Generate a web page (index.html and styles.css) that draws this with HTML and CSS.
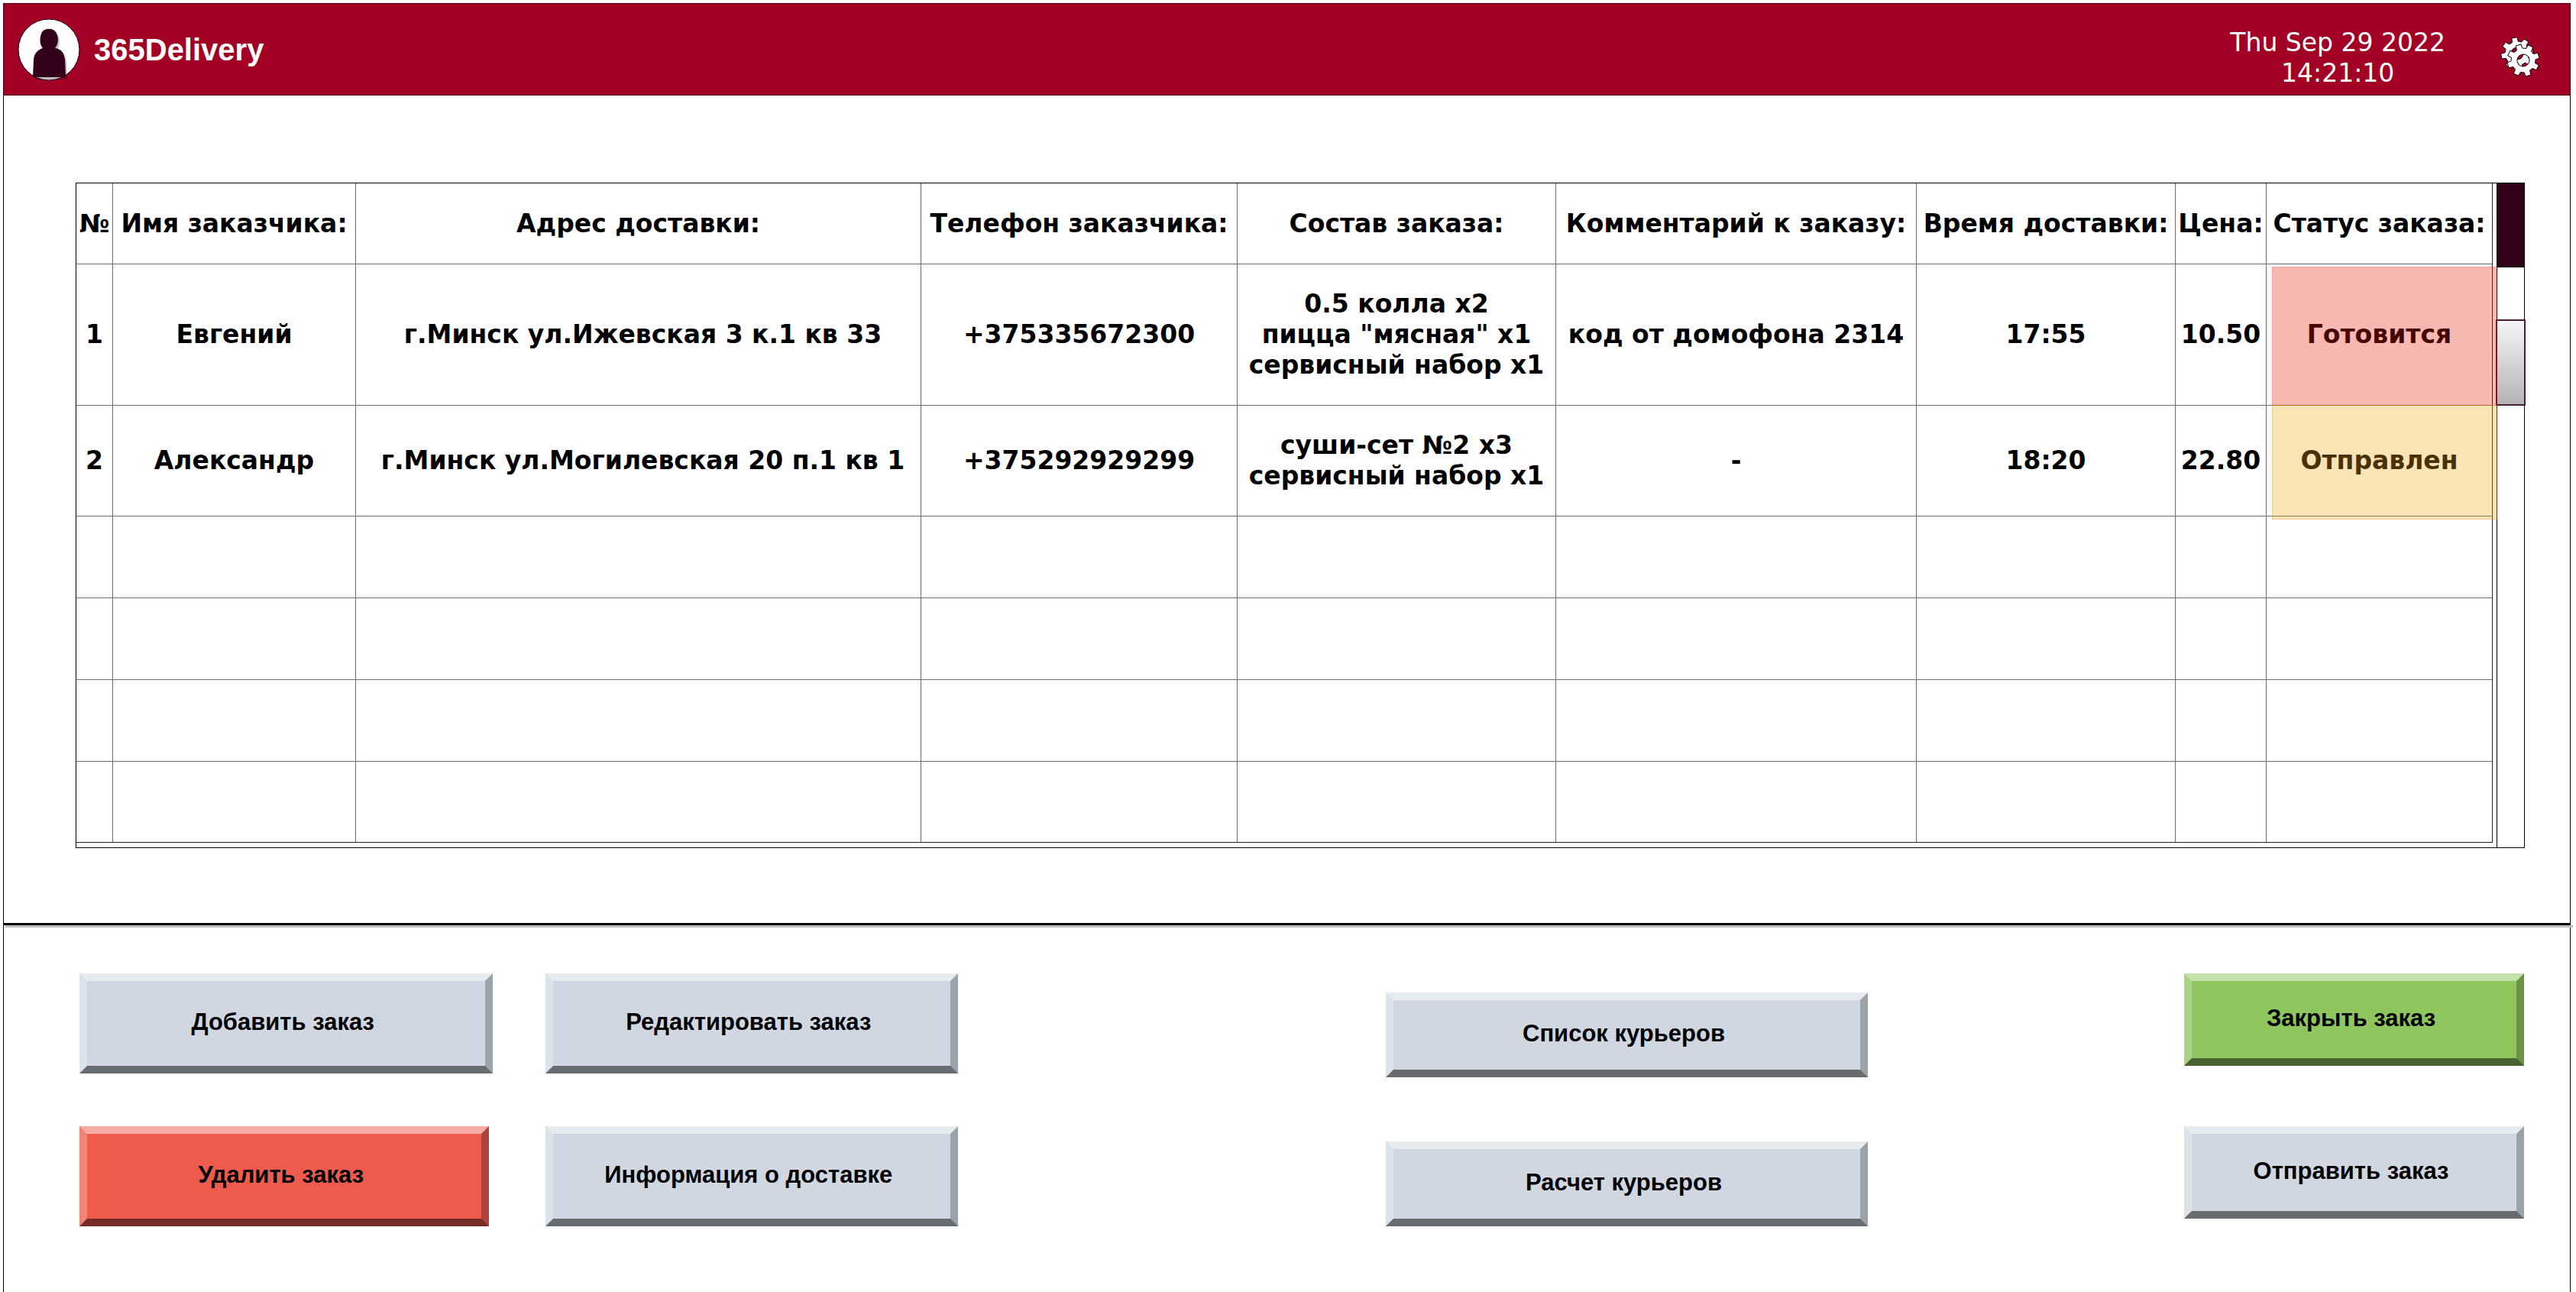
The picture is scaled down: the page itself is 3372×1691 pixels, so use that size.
FILE: index.html
```html
<!DOCTYPE html>
<html lang="ru">
<head>
<meta charset="utf-8">
<meta name="viewport" content="width=device-width, initial-scale=1">
<title>365Delivery</title>
<link rel="stylesheet" href="styles.css">
</head>
<body>
<div class="app">
  <header class="topbar">
    <svg class="avatar" viewBox="0 0 82 82" aria-hidden="true">
      <circle cx="41" cy="41" r="40" fill="#fff" stroke="#1a000d"/>
      <g fill="#000" fill-opacity=".25" transform="translate(2 3)">
        <path d="M33 39C28 34 29 23 32 18C35 13 46 12 50 18C54 23 54 34 49 39C57 40 61 45 62 54L63 77H20L21 54C22 45 27 41 33 39Z"/>
      </g>
      <path fill="#33001a" d="M33 39C28 34 29 23 32 18C35 13 46 12 50 18C54 23 54 34 49 39C57 40 61 45 62 54L63 77H20L21 54C22 45 27 41 33 39Z"/>
    </svg>
    <h1 class="brand">365Delivery</h1>
    <time class="clock" datetime="2022-09-29T14:21:10">Thu Sep 29 2022<br>14:21:10</time>
    <button class="settings" type="button" aria-label="Настройки">
      <svg viewBox="0 0 52 52" fill="#fff" fill-rule="evenodd" stroke="#1a000d">
        <defs>
          <path id="gear" d="M15.500-4L21-3.500L21 3.500L15.500 4L13.800 8.100L17.300 12.400L12.400 17.300L8.100 13.800L4 15.500L3.500 21L-3.500 21L-4 15.500L-8.100 13.800L-12.400 17.300L-17.300 12.400L-13.800 8.100L-15.500 4L-21 3.500L-21-3.500L-15.500-4L-13.800-8.100L-17.300-12.400L-12.400-17.300L-8.100-13.800L-4-15.500L-3.500-21L3.500-21L4-15.500L8.100-13.800L12.400-17.300L17.300-12.400L13.800-8.100ZM8 0A8 8 0 1 0-8 0A8 8 0 1 0 8 0Z"/>
        </defs>
        <use href="#gear" transform="translate(21 21) rotate(-10)"/>
        <use href="#gear" transform="translate(29 30) rotate(-18)"/>
      </svg>
    </button>
  </header>

  <main>
    <section class="orders">
      <div class="frame">
        <div class="table-area">
          <table class="order-table">
            <colgroup>
              <col class="c-num"><col class="c-name"><col class="c-address"><col class="c-phone"><col class="c-items"><col class="c-comment"><col class="c-time"><col class="c-price"><col class="c-status">
            </colgroup>
            <thead>
              <tr>
                <th scope="col">№</th><th scope="col">Имя заказчика:</th><th scope="col">Адрес доставки:</th><th scope="col">Телефон заказчика:</th><th scope="col">Состав заказа:</th><th scope="col">Комментарий к заказу:</th><th scope="col">Время доставки:</th><th scope="col">Цена:</th><th scope="col">Статус заказа:</th>
              </tr>
            </thead>
            <tbody>
              <tr class="row-3">
                <td>1</td><td>Евгений</td><td class="address">г.Минск ул.Ижевская 3 к.1 кв 33</td><td>+375335672300</td><td>0.5 колла x2<br>пицца "мясная" x1<br>сервисный набор x1</td><td>код от домофона 2314</td><td>17:55</td><td>10.50</td><td class="status cooking">Готовится</td>
              </tr>
              <tr class="row-2">
                <td>2</td><td>Александр</td><td class="address">г.Минск ул.Могилевская 20 п.1 кв 1</td><td>+375292929299</td><td>суши-сет №2 x3<br>сервисный набор x1</td><td>-</td><td>18:20</td><td>22.80</td><td class="status sent">Отправлен</td>
              </tr>
              <tr><td></td><td></td><td></td><td></td><td></td><td></td><td></td><td></td><td></td></tr>
              <tr><td></td><td></td><td></td><td></td><td></td><td></td><td></td><td></td><td></td></tr>
              <tr><td></td><td></td><td></td><td></td><td></td><td></td><td></td><td></td><td></td></tr>
              <tr><td></td><td></td><td></td><td></td><td></td><td></td><td></td><td></td><td></td></tr>
            </tbody>
          </table>
        </div>
        <div class="scroll">
          <div class="scroll-cap"></div>
          <div class="scroll-thumb"></div>
        </div>
      </div>
    </section>

    <hr class="divider">

    <section class="actions">
      <div class="group orders-group">
        <button class="btn" type="button">Добавить заказ</button>
        <button class="btn" type="button">Редактировать заказ</button>
        <button class="btn danger" type="button">Удалить заказ</button>
        <button class="btn" type="button">Информация о доставке</button>
      </div>
      <div class="group couriers-group">
        <button class="btn" type="button">Список курьеров</button>
        <button class="btn" type="button">Расчет курьеров</button>
      </div>
      <div class="group finish-group">
        <button class="btn success" type="button">Закрыть заказ</button>
        <button class="btn" type="button">Отправить заказ</button>
      </div>
    </section>
  </main>
</div>
</body>
</html>
```
FILE: styles.css
```css
* {
  box-sizing: border-box;
}

body {
  margin: 0;
  background: #fff;
  color: #000;
  font-family: "DejaVu Sans", Verdana, sans-serif;
  font-size: 33px;
  line-height: 40px;
}

.app {
  margin: 4px 7px 0 4px;
  min-height: calc(100vh - 4px);
  border: solid #000;
  border-width: 0 1px;
}

/* top bar */
.topbar {
  display: flex;
  align-items: center;
  height: 121px;
  margin: 0 -1px;
  padding: 0 38px 0 18px;
  background: #a20025;
  border: 1px solid #4d0012;
  color: #fff;
}

.avatar {
  width: 82px;
  height: 82px;
}

.brand {
  margin: 0 auto 0 18px;
  font: bold 40px/48px "Liberation Sans", Arial, sans-serif;
}

.clock {
  padding-top: 22px;
  text-align: center;
}

.settings {
  width: 52px;
  height: 52px;
  margin: 20px 0 0 73px;
  padding: 0;
  border: 0;
  background: none;
}

.settings svg {
  display: block;
}

/* orders table */
.orders {
  padding: 114px 59px 98px 94px;
}

.frame {
  display: flex;
  border: 1px solid #000;
}

.table-area {
  flex: 1;
  min-width: 0;
  padding: 0 6px 6px 0;
}

.order-table {
  width: 100%;
  table-layout: fixed;
  border-collapse: separate;
  border-spacing: 0;
  border: solid #222;
  border-width: 0 1px 1px 0;
  font-weight: bold;
  text-align: center;
  white-space: nowrap;
}

.c-num { width: 48px; }
.c-name { width: 318px; }
.c-address { width: 740px; }
.c-phone { width: 414px; }
.c-items { width: 417px; }
.c-comment { width: 472px; }
.c-time { width: 339px; }
.c-price { width: 119px; }
.c-status { width: 295px; }

th,
td {
  height: 107px;
  padding: 0;
  border: solid #6e6e6e;
  border-width: 0 1px 1px 0;
}

th {
  height: 106px;
}

th:last-child,
td:last-child {
  border-right: 0;
}

tr:last-child td {
  border-bottom: 0;
  height: 105px;
}

.row-3 td { height: 185px; }
.row-2 td { height: 145px; }

.address {
  padding-left: 12px;
}

/* translucent status highlight, laid over the cell and its lines */
.status {
  position: relative;
}

.status::after {
  content: "";
  position: absolute;
  left: 7px;
  right: -7px;
}

.cooking::after {
  top: 3px;
  bottom: -1px;
  background: rgba(229, 20, 0, .3);
  border: 1px solid rgba(178, 0, 0, .1);
}

.sent::after {
  top: -1px;
  bottom: -5px;
  background: rgba(240, 163, 10, .3);
  border: 1px solid rgba(189, 112, 0, .2);
}

/* scroll bar */
.scroll {
  width: 36px;
  border-left: 1px solid #000;
}

.scroll-cap {
  height: 110px;
  background: #33001a;
  border-bottom: 1px solid #000;
}

.scroll-thumb {
  height: 113px;
  margin: 68px -2px 0;
  border: 2px solid #4a1f36;
  background: linear-gradient(#f5f5f5, #b3b3b3);
}

.divider {
  height: 3px;
  margin: 0 -1px;
  border: 0;
  background: #000;
  box-shadow: 3px 3px 0 #bfbfbf;
}

/* action buttons */
.actions {
  display: grid;
  grid-template-columns: 1150fr 560fr 631fr 414fr 445fr;
  padding: 63px 60px 86px 99px;
}

.group {
  display: grid;
  align-content: start;
}

.orders-group {
  grid-template-columns: 1fr 1fr;
  gap: 69px;
}

.couriers-group {
  grid-column: 3;
  align-self: end;
  gap: 84px;
}

.finish-group {
  grid-column: 5;
  gap: 79px;
}

.btn {
  height: 131px;
  padding: 0 8px 4px 0;
  border: 10px solid;
  border-color: #e6ebef #9ba2a8 #676c70 #dbe2e8;
  background: #d0d7e1;
  color: #000;
  font: bold 31px/36px "Liberation Sans", Arial, sans-serif;
}

.couriers-group .btn { height: 111px; }
.finish-group .btn { height: 121px; }

.danger {
  margin-right: 5px;
  border-color: #f6aca5 #b14239 #762c26 #f28379;
  background: #ee5a4c;
}

.success {
  border-color: #c7e1ae #6b9346 #47622e #abd387;
  background: #8fc55d;
}
```
